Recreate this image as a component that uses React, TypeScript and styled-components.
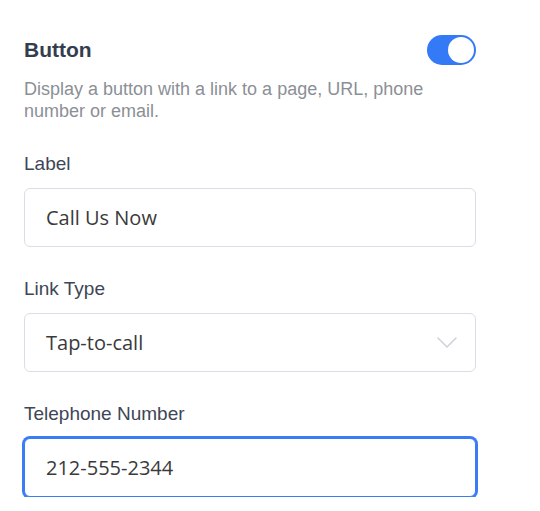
import React from 'react';
import styled, { createGlobalStyle } from 'styled-components';

const GlobalStyle = createGlobalStyle`
  body {
    margin: 0;
    background: #ffffff;
    font-family: "Liberation Sans", Arial, sans-serif;
  }
`;

const Panel = styled.div`
  width: 452px;
  padding: 35px 0 0 24px;
  display: flex;
  flex-direction: column;
`;

const Header = styled.div`
  display: flex;
  justify-content: space-between;
  align-items: center;
  height: 30px;
`;

const Title = styled.h2`
  margin: 0;
  font-size: 21px;
  font-weight: 700;
  color: #343d4f;
  line-height: 24px;
`;

const Toggle = styled.div<{ $on: boolean }>`
  width: 49px;
  height: 30px;
  border-radius: 15px;
  background: ${(p) => (p.$on ? '#3479f6' : '#d1d5db')};
  display: flex;
  align-items: center;
  justify-content: ${(p) => (p.$on ? 'flex-end' : 'flex-start')};
  padding: 0 2px;
  box-sizing: border-box;
`;

const Knob = styled.span`
  width: 26px;
  height: 26px;
  border-radius: 50%;
  background: #ffffff;
`;

const Description = styled.p`
  margin: 13px 0 0;
  font-size: 18px;
  line-height: 22px;
  color: #8b8f96;
`;

const Fields = styled.div`
  margin-top: 31px;
  display: flex;
  flex-direction: column;
  gap: 31px;
`;

const Field = styled.div`
  display: flex;
  flex-direction: column;
  gap: 13px;
`;

const Label = styled.label`
  font-size: 19px;
  line-height: 22px;
  color: #3e4657;
`;

const Box = styled.div<{ $focused?: boolean }>`
  height: 59px;
  box-sizing: border-box;
  border: 1px solid ${(p) => (p.$focused ? '#3a7cf5' : '#d9dee6')};
  box-shadow: ${(p) => (p.$focused ? '0 0 0 2px #3a7cf5' : 'none')};
  border-radius: 6px;
  background: #ffffff;
  display: flex;
  align-items: center;
  justify-content: space-between;
  padding: 0 18px 0 21px;
  font-family: "Open Sans", sans-serif;
  font-size: 20px;
  color: #3a3a3a;
`;

const Chevron = () => (
  <svg width="20" height="11" viewBox="0 0 20 11" fill="none">
    <path d="M1 1l9 9 9-9" stroke="#cdd3dc" strokeWidth="1.6" strokeLinecap="round" strokeLinejoin="round" />
  </svg>
);

export default function App() {
  return (
    <>
      <GlobalStyle />
      <Panel>
        <Header>
          <Title>Button</Title>
          <Toggle $on>
            <Knob />
          </Toggle>
        </Header>
        <Description>
          Display a button with a link to a page, URL, phone number or email.
        </Description>
        <Fields>
          <Field>
            <Label>Label</Label>
            <Box>Call Us Now</Box>
          </Field>
          <Field>
            <Label>Link Type</Label>
            <Box>
              Tap-to-call
              <Chevron />
            </Box>
          </Field>
          <Field>
            <Label>Telephone Number</Label>
            <Box $focused>212-555-2344</Box>
          </Field>
        </Fields>
      </Panel>
    </>
  );
}
